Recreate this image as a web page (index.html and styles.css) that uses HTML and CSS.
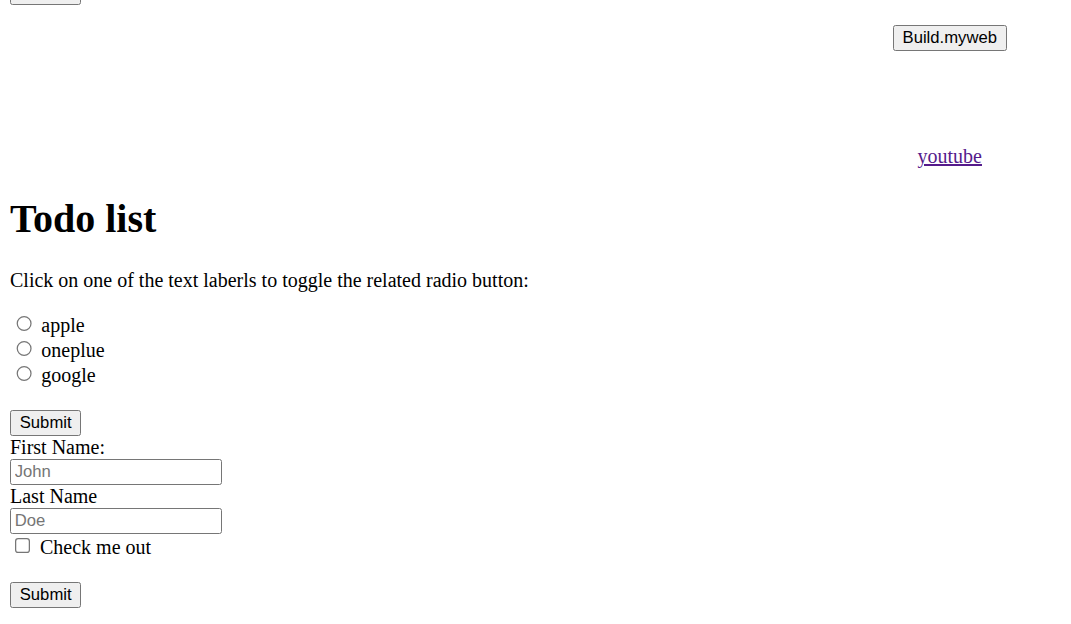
FILE: index.html
```html
<!DOCTYPE html>
<html>
<head>
<meta charset="utf-8">
<title>Todo list</title>
<link rel="stylesheet" href="styles.css">
</head>
<body>
<header class="top">
  <div class="peek">
    <button class="btn">Submit</button>
  </div>
  <nav class="side">
    <button class="btn">Build.myweb</button>
    <a class="link" href="#">youtube</a>
  </nav>
</header>
<h1 class="title">Todo list</h1>
<p class="intro">Click on one of the text laberls to toggle the related radio button:</p>
<form class="form">
  <input class="radio" type="radio" id="apple" name="brand"> <label for="apple">apple</label><br>
  <input class="radio" type="radio" id="oneplue" name="brand"> <label for="oneplue">oneplue</label><br>
  <input class="radio" type="radio" id="google" name="brand"> <label for="google">google</label><br>
  <br>
  <button class="btn" type="button">Submit</button><br>
  <label for="fname">First Name:</label><br>
  <input class="field" type="text" id="fname" placeholder="John"><br>
  <label for="lname">Last Name</label><br>
  <input class="field" type="text" id="lname" placeholder="Doe"><br>
  <input class="check" type="checkbox" id="check"> <label for="check">Check me out</label><br>
  <br>
  <button class="btn" type="button">Submit</button>
</form>
</body>
</html>
```

FILE: styles.css
```css
html {
  zoom: 1.25;
}
body {
  margin: 0 8px 8px;
  font-family: "Liberation Serif", "Times New Roman", serif;
  font-size: 16px;
  color: #000;
  background: #fff;
}
.top {
  display: flex;
  flex-direction: column;
}
.peek {
  height: 3.6px;
  overflow: hidden;
  display: flex;
  align-items: flex-end;
}
.peek .btn {
  flex: none;
}
.side {
  align-self: flex-end;
  width: 178px;
  display: flex;
  flex-direction: column;
  align-items: center;
  margin-top: 16.4px;
  gap: 75.5px;
}
.btn {
  font-family: "Liberation Sans", Arial, sans-serif;
  font-size: 13.333px;
  padding: 1.6px 7px;
  border: 1px solid #767676;
  border-radius: 2px;
  background: #efefef;
  color: #000;
}
.link {
  color: #551a8b;
  text-decoration: underline;
}
.title {
  font-size: 32px;
  font-weight: bold;
  margin: 21.44px 0;
}
.intro {
  margin: 16px 0;
}
.form {
  margin: 0;
}
.field {
  font-family: "Liberation Sans", Arial, sans-serif;
  font-size: 13.333px;
  width: 162px;
  padding: 1.6px 3px;
  border: 1px solid #767676;
  border-radius: 2px;
  margin: 0;
}
.field::placeholder {
  color: #757575;
}
```
